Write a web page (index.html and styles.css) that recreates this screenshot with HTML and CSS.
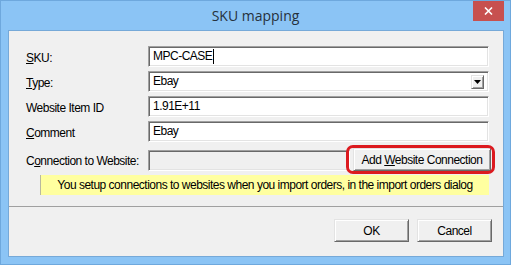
FILE: index.html
```html
<!DOCTYPE html>
<html lang="en">
<head>
    <meta charset="UTF-8">
    <title>SKU mapping</title>
    <link rel="stylesheet" href="styles.css">
</head>
<body>
    <div class="window">
        <div class="titlebar">
            <span></span>
            <span class="title">SKU mapping</span>
            <span class="close">
                <svg width="9" height="8" viewBox="0 0 9 8"><path d="M1 0.5 L8 7.5 M8 0.5 L1 7.5" stroke="#fff" stroke-width="1.6" fill="none"/></svg>
            </span>
        </div>
        <div class="client">
            <div class="form">
                <label class="label"><u>S</u>KU:</label>
                <div class="field">MPC-CASE<span class="caret"></span></div>

                <label class="label"><u>T</u>ype:</label>
                <div class="field combo">
                    <span>Ebay</span>
                    <span class="drop"><svg width="7" height="4" viewBox="0 0 7 4"><path d="M0 0 H7 L3.5 4 Z" fill="#000"/></svg></span>
                </div>

                <label class="label">Website Item ID</label>
                <div class="field">1.91E+11</div>

                <label class="label"><u>C</u>omment</label>
                <div class="field">Ebay</div>

                <label class="label conn-label">C<u>o</u>nnection to Website:</label>
                <div class="conn-row">
                    <div class="field disabled"></div>
                    <div class="marked">
                        <button class="btn add-btn">Add <u>W</u>ebsite Connection</button>
                    </div>
                </div>

                <div class="banner">You setup connections to websites when you import orders, in the import orders dialog</div>
            </div>
            <div class="actions">
                <button class="btn">OK</button>
                <button class="btn">Cancel</button>
            </div>
        </div>
    </div>
</body>
</html>
```

FILE: styles.css
```css
body {
    margin: 0;
    font-family: "Liberation Sans", Arial, sans-serif;
    font-size: 12px;
    letter-spacing: -0.5px;
    color: #000;
}

.window {
    width: 511px;
    height: 265px;
    box-sizing: border-box;
    background-color: #8bc4f5;
    border: 1px solid #6ea8dd;
    display: flex;
    flex-direction: column;
}

.titlebar {
    height: 29px;
    display: grid;
    grid-template-columns: 1fr auto 1fr;
    align-items: start;
}

.title {
    font-family: "Open Sans", "Noto Sans", sans-serif;
    font-size: 14px;
    letter-spacing: 0;
    color: #26313c;
    line-height: 30px;
}

.close {
    justify-self: end;
    width: 31px;
    height: 20px;
    margin-right: 6px;
    background-color: #c7504f;
    display: flex;
    align-items: center;
    justify-content: center;
}

.client {
    flex: 1;
    margin: 0 6px 7px 7px;
    background-color: #f0f0f0;
    border: 1px solid #76a9d8;
    display: flex;
    flex-direction: column;
}

.form {
    display: grid;
    grid-template-columns: 122px 1fr;
    grid-auto-rows: 21px;
    row-gap: 4px;
    padding: 15px 14px 14px 17px;
    border-bottom: 1px solid #a0a0a0;
    align-items: center;
}

.label {
    padding-top: 2px;
    white-space: nowrap;
}

.field {
    height: 21px;
    box-sizing: border-box;
    background-color: #fff;
    border: 1px solid;
    border-color: #a0a0a0 #fff #fff #a0a0a0;
    box-shadow: inset 1px 1px 0 #696969, inset -1px -1px 0 #e3e3e3;
    padding: 2px 3px 0 4px;
    display: flex;
    align-items: flex-start;
    line-height: 15px;
}

.caret {
    width: 1px;
    height: 15px;
    background-color: #000;
    margin-left: 1px;
}

.combo {
    justify-content: space-between;
}

.drop {
    width: 13px;
    height: 14px;
    margin-top: 1px;
    margin-right: 1px;
    box-sizing: border-box;
    background-color: #f0f0f0;
    border: 1px solid;
    border-color: #e3e3e3 #696969 #696969 #e3e3e3;
    box-shadow: inset 1px 1px 0 #fff, inset -1px -1px 0 #a0a0a0;
    display: flex;
    align-items: center;
    justify-content: center;
}

.conn-label {
    margin-top: 7px;
}

.conn-row {
    display: flex;
    gap: 3px;
    margin-top: 6px;
    margin-right: -2px;
    height: 23px;
    align-items: flex-end;
}

.field.disabled {
    flex: 1;
    background-color: #f0f0f0;
}

.marked {
    position: relative;
}

.marked::after {
    content: "";
    position: absolute;
    top: -3px;
    bottom: -3px;
    left: -7px;
    right: -4px;
    border: 3px solid #dc1a1f;
    border-radius: 7px;
}

.btn {
    font-family: inherit;
    font-size: 12px;
    letter-spacing: -0.5px;
    color: #000;
    height: 23px;
    box-sizing: border-box;
    background-color: #f0f0f0;
    border: 1px solid;
    border-color: #e3e3e3 #696969 #696969 #e3e3e3;
    box-shadow: inset 1px 1px 0 #fff, inset -1px -1px 0 #a0a0a0;
    padding: 0;
}

.add-btn {
    width: 138px;
    display: block;
}

.banner {
    grid-column: 1 / -1;
    margin: 6px 0 0 14px;
    height: 20px;
    background-color: #ffffa0;
    border-left: 1px solid #b8b8a0;
    text-align: center;
    line-height: 20px;
}

.actions {
    display: flex;
    justify-content: flex-end;
    gap: 8px;
    padding: 12px 11px 0 0;
}

.actions .btn {
    width: 75px;
}
```
